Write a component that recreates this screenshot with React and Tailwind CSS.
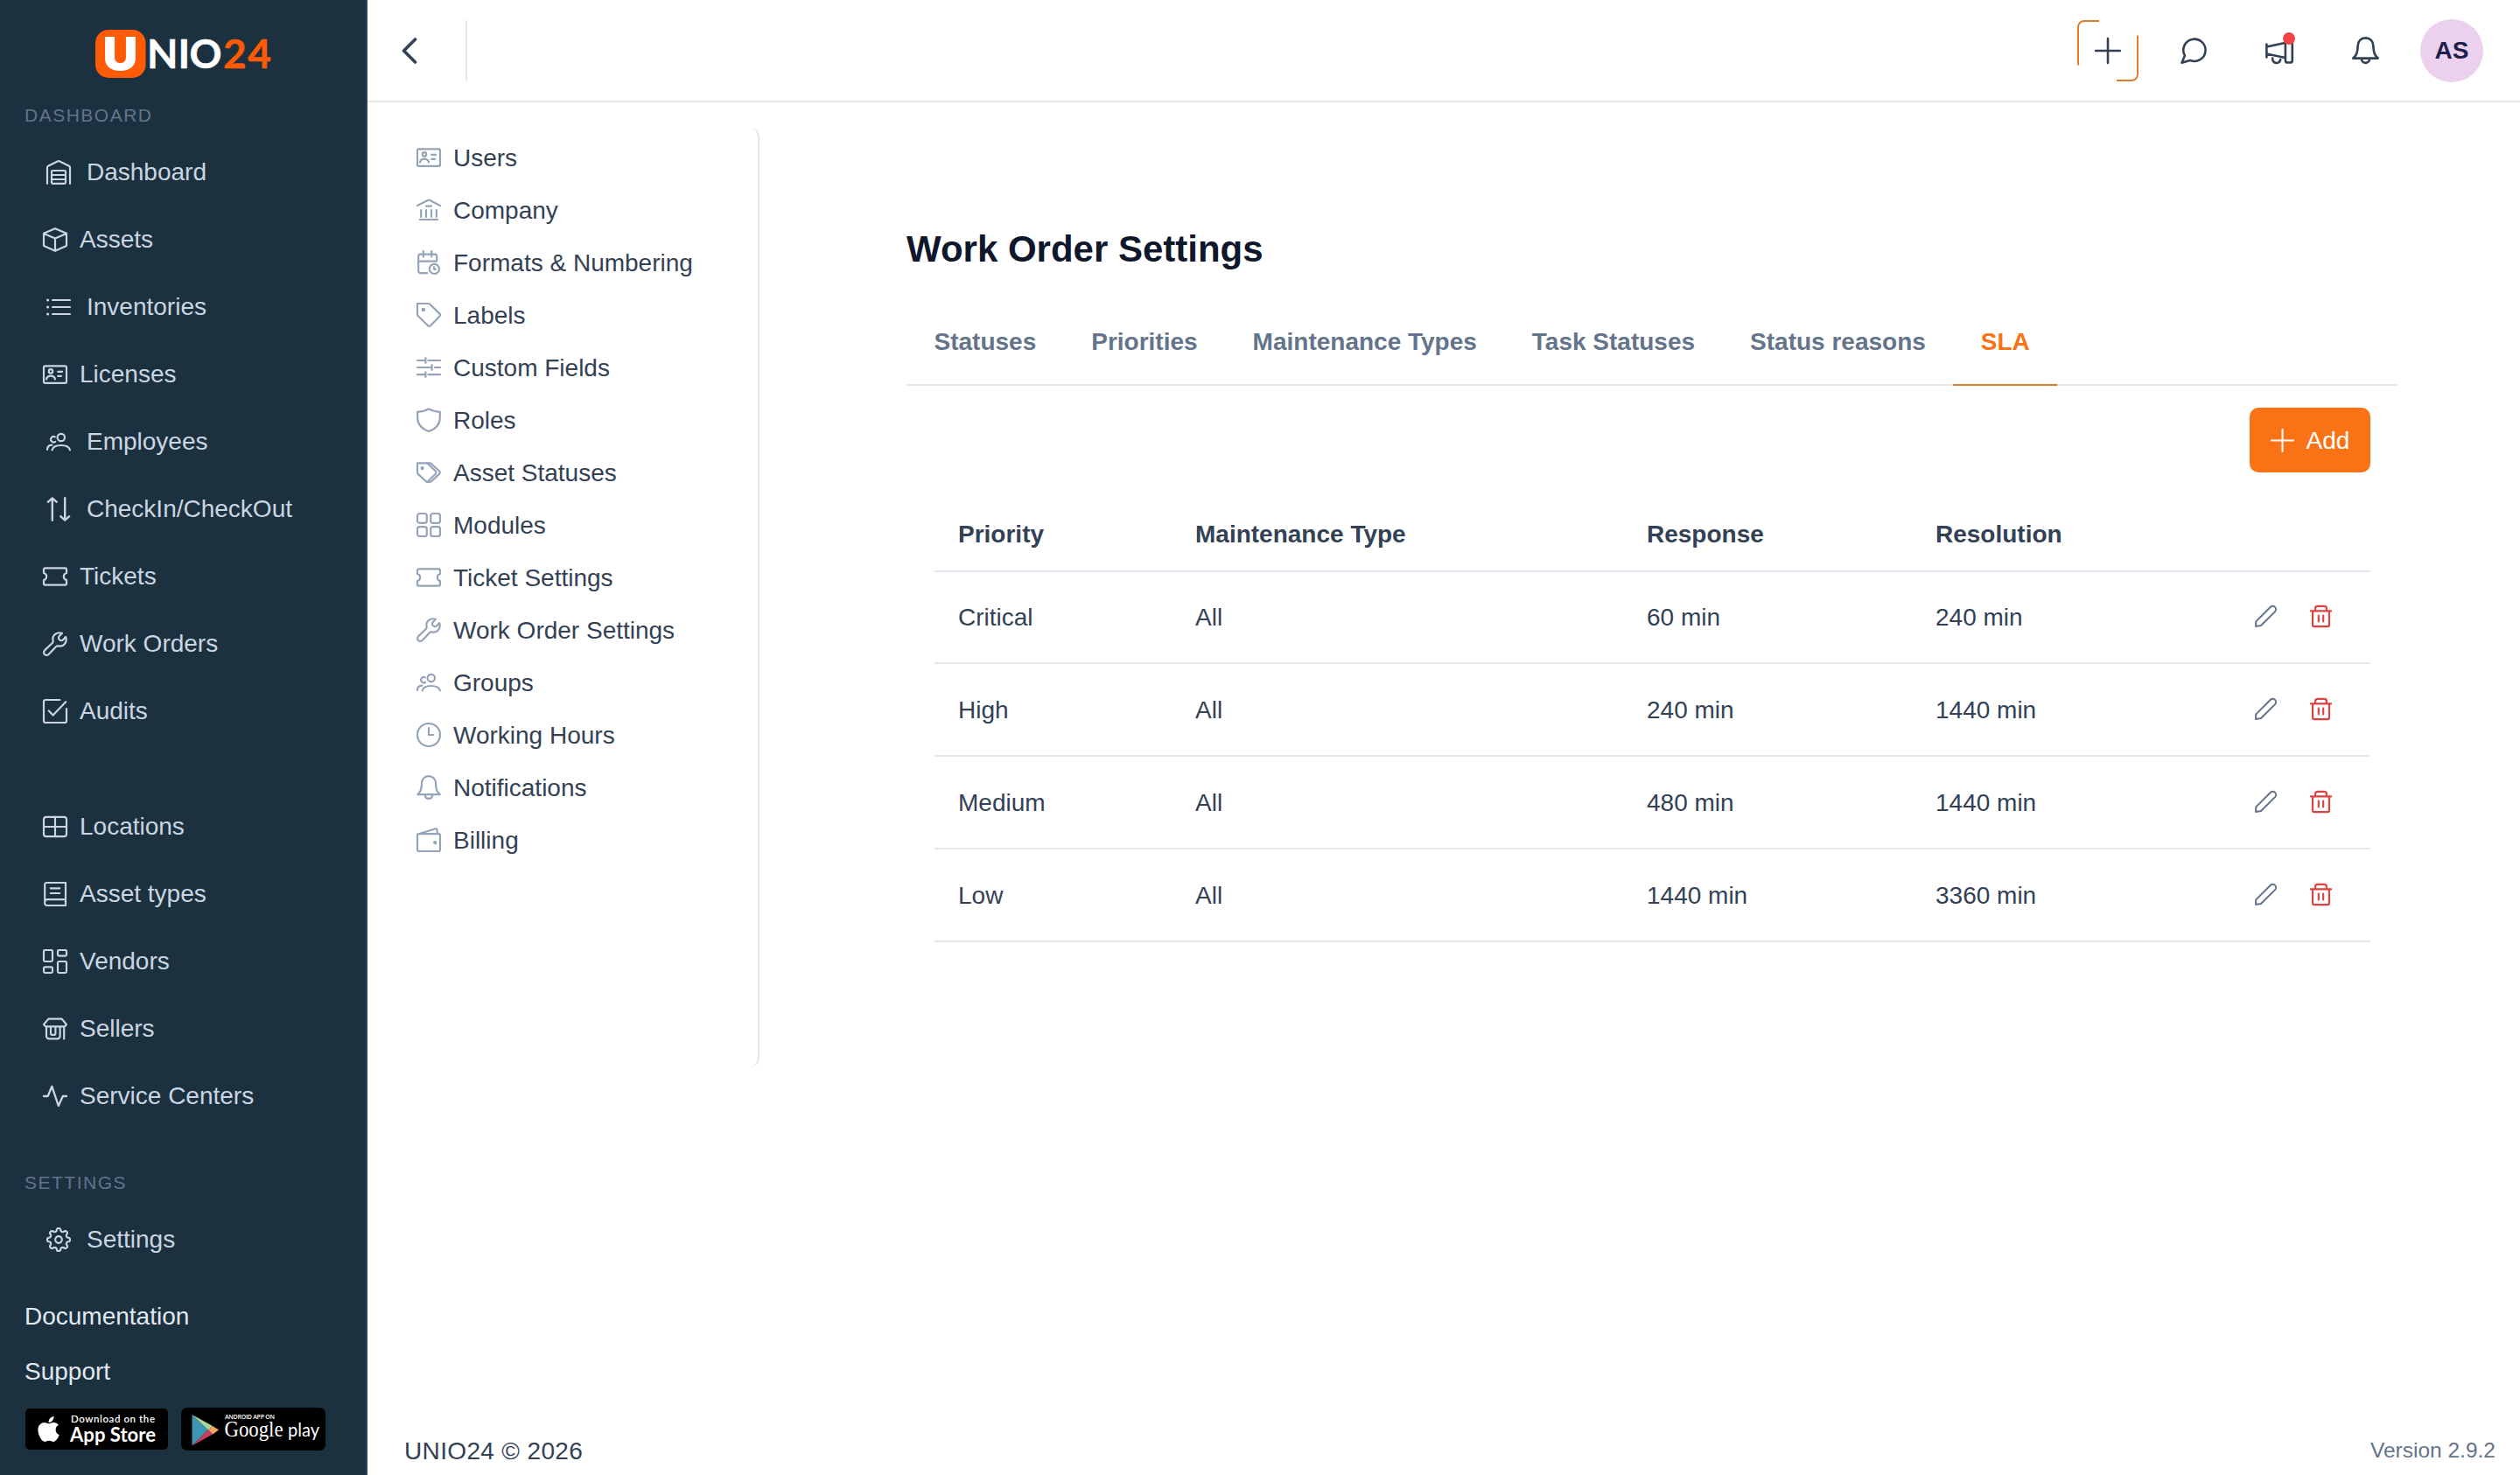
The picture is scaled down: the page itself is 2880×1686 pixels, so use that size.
import React from 'react';
import { FaApple } from 'react-icons/fa';

const gearPath = () => {
    const points = [];
    for (let i = 0; i < 160; i++) {
        const a = (i / 160) * Math.PI * 2;
        const r = 5.7 + 0.82 * Math.tanh(2 * Math.cos(a * 8));
        points.push(`${(7 + r * Math.sin(a)).toFixed(2)} ${(7 - r * Math.cos(a)).toFixed(2)}`);
    }
    return `M${points.join('L')}Z`;
};

// All glyphs are drawn on a 14x14 grid
const icons = {
    warehouse: (
        <>
            <path d="M.5 13.5V4.1a.8.8 0 0 1 .5-.7L6.6.6a1 1 0 0 1 .8 0L13 3.4a.8.8 0 0 1 .5.7v9.4" />
            <rect x="3" y="6" width="8" height="7.4" rx=".6" />
            <path d="M3 8.5h8M3 11h8" />
        </>
    ),
    box: <path d="M7 .6 13.5 3.4v7.1L7 13.4.5 10.5V3.4L7 .6ZM.5 3.5 7 6.3l6.5-2.8M7 6.3v7" />,
    list: (
        <>
            <path d="M3.5 3h10M3.5 7h10M3.5 11h10" />
            <path strokeWidth="1.6" d="M.8 3h.01M.8 7h.01M.8 11h.01" />
        </>
    ),
    idCard: (
        <>
            <rect x=".5" y="2.2" width="13" height="9.7" rx=".8" />
            <circle cx="4.5" cy="5.2" r="1.1" />
            <path d="M2 9.7c.3-1.3 1.3-1.9 2.5-1.9s2.200.6 2.500 1.900M8.600 5.400h2.500M8.600 7.900h1.900" />
        </>
    ),
    people: (
        <>
            <circle cx="8.400" cy="4.500" r="2.100" />
            <path d="M3.300 11.700C3.800 9.700 5.900 9 8.400 9s4.500.7 5.100 2.700M4.900 4.200a1.600 1.600 0 1 0 .2 2.700M.5 11.500C.5 9.900 1.500 8.900 3.200 8.800" />
        </>
    ),
    arrows: (
        <path strokeWidth="1.2" d="M3.400 13.400V.8M.9 2.900 3.400.7l2.500 2.200M10.600.6v12.600M8.100 11.100l2.500 2.200 2.500-2.200" />
    ),
    ticket: (
        <path d="M.5 5V3a.8.8 0 0 1 .8-.8h11.400a.8.8 0 0 1 .8.8v2a2.050 2.050 0 0 0 0 4v2a.8.8 0 0 1-.8.8H1.300a.8.8 0 0 1-.8-.8V9a2.050 2.050 0 0 0 0-4Z" />
    ),
    wrench: (
        <path d="M11 .9C8.200-.1 5 2 5.800 5.300c.1.5 0 .8-.4 1.200L1 10.700A1.600 1.600 0 0 0 3.300 13l4.300-4.500c.3-.3.7-.4 1.100-.3C12 9 14.100 5.800 13.100 3l-1.500 1.600a1.500 1.500 0 0 1-2.200-2.100L11 .9Z" />
    ),
    audit: (
        <path d="M9.700.5H1.500a1 1 0 0 0-1 1v11a1 1 0 0 0 1 1h11a1 1 0 0 0 1-1V5.600M3.400 6.700l2.400 2.600L13.100 1.600" />
    ),
    grid: (
        <>
            <rect x=".5" y="1.400" width="13" height="11.200" rx="1.500" />
            <path d="M7 1.400v11.200M.5 7h13" />
        </>
    ),
    book: (
        <path d="M13 10.100V.5H2.100a1 1 0 0 0-1 1v10.700a1.300 1.300 0 0 0 1.300 1.300H13M13 10.100v3.400M13 10.100H2.400A1.300 1.300 0 0 0 1.100 11.400M4.400 3.700H9.600M4.400 6.500H9.600" />
    ),
    blocks: (
        <>
            <rect x=".5" y=".5" width="5" height="6.500" rx=".7" />
            <rect x="8.500" y=".5" width="5" height="3.300" rx=".7" />
            <rect x=".5" y="10.200" width="5" height="3.300" rx=".7" />
            <rect x="8.500" y="7" width="5" height="6.500" rx=".7" />
        </>
    ),
    store: (
        <path d="M3.200 1.300h7.600l2.700 3.200-1 1.200h-11l-1-1.200 2.700-3.200ZM2 5.700v5.400a1.600 1.600 0 0 0 1.600 1.600h4.600a1.600 1.600 0 0 0 1.600-1.600V5.700M4.500 5.700v4.200c0 .3.2.5.5.5h1.700c.3 0 .5-.2.500-.5V5.700M12.100 5.700v7" />
    ),
    pulse: <path strokeWidth="1.150" d="M.5 7h2.300l2.400-5.600L8.900 12.500 11.400 7h2.100" />,
    gear: (
        <>
            <path d={gearPath()} />
            <circle cx="7" cy="7" r="1.900" />
        </>
    ),
    bank: (
        <path d="M.5 4.500 6.600 1.400a1 1 0 0 1 .8 0l6.100 3.100M5.500 4.800h3M2.600 7v4M5.500 7v4M8.500 7v4M11.400 7v4M1.900 12.500h10.200" />
    ),
    calendar: (
        <>
            <path d="M6.100 13.100H2.300A1.200 1.200 0 0 1 1.100 11.900V3.500a1.200 1.200 0 0 1 1.200-1.200h8.100a1.200 1.200 0 0 1 1.200 1.200v2.800H1.100M3.900.6v3.100M8.600.6v3.100" />
            <circle cx="10.200" cy="10.700" r="2.800" />
            <path d="M10 9.600v1.300h.9" />
        </>
    ),
    tag: (
        <>
            <path d="M.5.5h6.300c.3 0 .5.1.7.3l5.700 5.500a1 1 0 0 1 0 1.400L8 13.100a1 1 0 0 1-1.400 0L.8 7.500A1 1 0 0 1 .5 6.800V.5Z" />
            <circle cx="3.900" cy="4" r=".6" fill="currentColor" />
        </>
    ),
    sliders: (
        <path d="M.5 3h4.600M6.700 3h6.800M5.200 1.600v2.800M.5 7h8M10.500 7h3M8.800 5.600v2.800M.5 11.100h4.600M6.700 11.100h6.800M5.200 9.700v2.800" />
    ),
    shield: (
        <path d="M7 .7C5.100 1.800 3 2.300.6 2.400v3.300c0 4 2.600 6.400 6.400 7.800 3.800-1.400 6.400-3.800 6.400-7.800V2.400C11 2.300 8.900 1.800 7 .7Z" />
    ),
    tags: (
        <>
            <path d="M.5 1.700h5.300c.3 0 .5.1.7.3l4.500 4.400a1 1 0 0 1 0 1.300l-4.300 4.300a1 1 0 0 1-1.400 0L.8 7.800a1 1 0 0 1-.3-.7V1.700Z" />
            <path d="M5.800 1.700h1.900c.3 0 .5.1.7.3l4.800 4.400a1 1 0 0 1 0 1.300l-4.500 4.300c-.3.300-.6.400-1 .4H6" />
            <circle cx="3.300" cy="4.600" r=".5" fill="currentColor" />
        </>
    ),
    modules: (
        <>
            <rect x=".5" y=".5" width="5.400" height="5.400" rx="1.300" />
            <rect x="8.100" y=".5" width="5.400" height="5.400" rx="1.300" />
            <rect x=".5" y="8.100" width="5.400" height="5.400" rx="1.300" />
            <rect x="8.100" y="8.100" width="5.400" height="5.400" rx="1.300" />
        </>
    ),
    clock: (
        <>
            <circle cx="7" cy="7" r="6.500" />
            <path d="M7 3.100V7h2.500" />
        </>
    ),
    bell: (
        <path d="M7 .6C4.700.6 3 2.300 3 4.700c0 3.200-.6 5-2.400 6.400h12.800C11.600 9.700 11 7.900 11 4.700 11 2.300 9.300.6 7 .6ZM4.900 11.300c.1 2.900 4.100 2.900 4.200 0" />
    ),
    wallet: (
        <>
            <rect x=".5" y="3.600" width="13" height="9.900" rx=".9" />
            <path d="M2 3.400 10.900.6a.6.6 0 0 1 .8.5l.3 2.400" />
            <circle cx="10.600" cy="8.600" r=".5" fill="currentColor" />
        </>
    ),
    plus: <path d="M7 .5v13M.5 7h13" />,
    chat: <path d="M.7 13.400 2.300 9.600A5.900 5.900 0 1 1 5.100 12.100L.7 13.400Z" />,
    pencil: <path d="M.6 13.400.7 10.300 9.900 1.100A1.950 1.950 0 0 1 12.900 4L3.900 12.900.6 13.400Z" />,
    trash: (
        <path d="M.5 3.600h13M1.700 3.600v8.900a1 1 0 0 0 1 1h8.600a1 1 0 0 0 1-1V3.600M3.400 3.600V2A1.500 1.500 0 0 1 4.900.5h4.200A1.500 1.500 0 0 1 10.600 2v1.600M5.500 6.500v3.800M8.500 6.500v3.800" />
    ),
};

const Icon = ({ name, className = 'w-7 h-7', strokeWidth = 1.08 }) => (
    <svg
        viewBox="0 0 14 14"
        className={`shrink-0 overflow-visible ${className}`}
        fill="none"
        stroke="currentColor"
        strokeWidth={strokeWidth}
        strokeLinecap="round"
        strokeLinejoin="round"
    >
        {icons[name]}
    </svg>
);

const mainLinks = [
    { label: 'Dashboard', icon: 'warehouse', wide: true },
    { label: 'Assets', icon: 'box' },
    { label: 'Inventories', icon: 'list', wide: true },
    { label: 'Licenses', icon: 'idCard' },
    { label: 'Employees', icon: 'people', wide: true },
    { label: 'CheckIn/CheckOut', icon: 'arrows', wide: true },
    { label: 'Tickets', icon: 'ticket' },
    { label: 'Work Orders', icon: 'wrench' },
    { label: 'Audits', icon: 'audit' },
];

const catalogLinks = [
    { label: 'Locations', icon: 'grid' },
    { label: 'Asset types', icon: 'book' },
    { label: 'Vendors', icon: 'blocks' },
    { label: 'Sellers', icon: 'store' },
    { label: 'Service Centers', icon: 'pulse' },
];

const settingsMenu = [
    { label: 'Users', icon: 'idCard' },
    { label: 'Company', icon: 'bank' },
    { label: 'Formats & Numbering', icon: 'calendar' },
    { label: 'Labels', icon: 'tag' },
    { label: 'Custom Fields', icon: 'sliders' },
    { label: 'Roles', icon: 'shield' },
    { label: 'Asset Statuses', icon: 'tags' },
    { label: 'Modules', icon: 'modules' },
    { label: 'Ticket Settings', icon: 'ticket' },
    { label: 'Work Order Settings', icon: 'wrench' },
    { label: 'Groups', icon: 'people' },
    { label: 'Working Hours', icon: 'clock' },
    { label: 'Notifications', icon: 'bell' },
    { label: 'Billing', icon: 'wallet' },
];

const tabs = ['Statuses', 'Priorities', 'Maintenance Types', 'Task Statuses', 'Status reasons', 'SLA'];

const rows = [
    { priority: 'Critical', type: 'All', response: '60 min', resolution: '240 min' },
    { priority: 'High', type: 'All', response: '240 min', resolution: '1440 min' },
    { priority: 'Medium', type: 'All', response: '480 min', resolution: '1440 min' },
    { priority: 'Low', type: 'All', response: '1440 min', resolution: '3360 min' },
];

const SideLink = ({ label, icon, wide }) => (
    <a href="#" className={`flex h-[77px] items-center ${wide ? 'gap-[18px] pl-[53px]' : 'gap-[14px] pl-[49px]'}`}>
        <Icon name={icon} />
        <span>{label}</span>
    </a>
);

const Logo = () => (
    <div className="ml-[109px] flex h-[57px] items-start">
        <svg viewBox="0 0 202 70" className="h-[70px] w-[202px] shrink-0 overflow-visible">
            <rect y="1" width="57.500" height="55" rx="15" fill="#ff5a05" />
            <text x="8.500" y="46.500" textLength="40" lengthAdjust="spacingAndGlyphs" fontFamily="Inter, sans-serif" fontWeight="900" fontSize="52" fill="#fff">U</text>
            <g fontFamily="Lato, sans-serif" fontWeight="700" fontSize="46" fill="#fff" stroke="#fff" strokeWidth=".5">
                <text x="59" y="45">N</text>
                <text x="94.500" y="45">I</text>
                <text x="107.500" y="45" textLength="37" lengthAdjust="spacingAndGlyphs">O</text>
                <text x="146" y="45" fill="#ff5a05" stroke="#ff5a05" textLength="55">24</text>
            </g>
        </svg>
    </div>
);

const AppStoreBadge = () => (
    <a href="#" className="flex h-[47px] w-[163px] items-center rounded-[5px] bg-black pl-[12px] text-white">
        <FaApple className="h-[33px] w-[29px]" />
        <svg viewBox="0 0 100 47" className="ml-[10px] h-[47px] w-[100px] overflow-visible" fill="#fff">
            <text x="1" y="16" fontFamily="Lato, sans-serif" fontWeight="600" fontSize="11.500" textLength="96">Download on the</text>
            <text x="0" y="37.500" fontFamily="Lato, sans-serif" fontWeight="700" fontSize="22.500" textLength="98" lengthAdjust="spacingAndGlyphs">App Store</text>
        </svg>
    </a>
);

const GooglePlayBadge = () => (
    <a href="#" className="flex h-[49px] w-[165px] rounded-[7px] bg-black">
        <svg viewBox="0 0 165 49" className="h-[49px] w-[165px] overflow-visible">
            <path d="M12.500 8v35.500L31 25.500Z" fill="#3f96b4" />
            <path d="M12.500 8 36 21l-5 4.500Z" fill="#a9d79b" />
            <path d="M36 21l7 4.500-7 5-5-5Z" fill="#f9a267" />
            <path d="M12.500 43.500 36 30.500l-5-5Z" fill="#c8405c" />
            <g fill="#fff">
                <text x="50" y="13" fontFamily="'Open Sans', sans-serif" fontWeight="600" fontSize="7" textLength="57">ANDROID APP ON</text>
                <text x="49.500" y="33" fontFamily="'Liberation Serif', serif" fontSize="25" textLength="67" lengthAdjust="spacingAndGlyphs">Google</text>
                <text x="122" y="33" fontFamily="Lato, sans-serif" fontSize="22" textLength="36" lengthAdjust="spacingAndGlyphs">play</text>
            </g>
        </svg>
    </a>
);

const Sidebar = () => (
    <aside className="flex w-[420px] shrink-0 flex-col border-r-2 border-[#2a4158] bg-[#1b313f] pt-[33px] text-[28px] text-[#cbd5e1]">
        <Logo />
        <div className="mt-4 flex h-[52px] items-center pb-[2px] pl-7 text-[21px] tracking-[1.500px] text-[#64748b]">DASHBOARD</div>
        <nav>{mainLinks.map((link) => <SideLink key={link.label} {...link} />)}</nav>
        <nav className="mt-[55px]">{catalogLinks.map((link) => <SideLink key={link.label} {...link} />)}</nav>
        <div className="mt-[35px] flex h-[52px] items-center pb-[2px] pl-7 text-[21px] tracking-[1.500px] text-[#64748b]">SETTINGS</div>
        <SideLink label="Settings" icon="gear" wide />
        <div className="mt-[18px] flex flex-col pl-7 text-[#e2e8f0]">
            <a href="#" className="flex h-[63px] items-center">Documentation</a>
            <a href="#" className="flex h-[63px] items-center">Support</a>
        </div>
        <div className="mt-[10px] flex items-center gap-[15px] pl-[29px]">
            <AppStoreBadge />
            <GooglePlayBadge />
        </div>
    </aside>
);

const Header = () => (
    <header className="flex h-[117px] shrink-0 items-center justify-between border-b-2 border-[#e5e7eb] pl-[39px] pr-[42px] text-[#334155]">
        <div className="flex items-center">
            <svg viewBox="0 0 18 32" className="h-8 w-[18px]" fill="none" stroke="currentColor" strokeWidth="3.600" strokeLinecap="round" strokeLinejoin="round">
                <path d="M15.500 3 2.500 16l13 13" />
            </svg>
            <div className="ml-[55px] h-[70px] w-[2px] bg-[#e5e7eb]"></div>
        </div>
        <div className="flex items-center gap-7">
            <button className="relative flex h-[70px] w-[70px] items-center justify-center">
                <svg viewBox="0 0 70 70" className="absolute inset-0 h-[70px] w-[70px]" fill="none" stroke="#e27c2c" strokeWidth="2">
                    <path d="M1 51.500V8a7 7 0 0 1 7-7h17M69 17.500V62a7 7 0 0 1-7 7H45" />
                </svg>
                <Icon name="plus" className="h-[30px] w-[30px]" strokeWidth={1.2} />
            </button>
            <button className="flex h-[70px] w-[70px] items-center justify-center">
                <Icon name="chat" className="h-[30px] w-[30px]" strokeWidth={1.2} />
            </button>
            <button className="relative flex h-[70px] w-[70px] items-center justify-center">
                <svg viewBox="0 0 32 30" className="h-[30px] w-8 overflow-visible" fill="none" stroke="currentColor" strokeWidth="2.600" strokeLinecap="round" strokeLinejoin="round">
                    <path d="M1.400 7.500v15M1.400 10.500 22.600 6M1.400 18.500 22.600 23M8.200 23.500c-.6 6.500 8.200 7.500 9 1.500" />
                    <rect x="22.900" y="2.500" width="7.900" height="26" rx="2.600" />
                </svg>
                <span className="absolute right-[17px] top-[14px] h-[14px] w-[14px] rounded-full bg-[#ef4444]"></span>
            </button>
            <button className="flex h-[70px] w-[70px] items-center justify-center">
                <Icon name="bell" className="h-[31px] w-[31px]" strokeWidth={1.2} />
            </button>
            <div className="flex h-[72px] w-[72px] items-center justify-center rounded-full bg-[#ebd1ee] text-[28px] font-bold text-[#1b214c]">
                AS
            </div>
        </div>
    </header>
);

const SlaTable = () => (
    <div className="mr-[31px] ml-8 mt-7 text-[#334155]">
        <div className="grid h-[86px] grid-cols-[270px_516px_330px_1fr] items-center border-b-2 border-[#e2e8f0] pt-[2px] font-bold">
            <div className="pl-[27px]">Priority</div>
            <div className="pl-7">Maintenance Type</div>
            <div className="pl-7">Response</div>
            <div className="pl-7">Resolution</div>
        </div>
        {rows.map((row) => (
            <div key={row.priority} className="grid h-[106px] grid-cols-[270px_516px_330px_1fr_auto] items-center border-b-2 border-[#e5e7eb] nth-2:h-[105px]">
                <div className="pl-[27px] pt-px">{row.priority}</div>
                <div className="pl-7 pt-px">{row.type}</div>
                <div className="pl-7 pt-px">{row.response}</div>
                <div className="pl-7 pt-px">{row.resolution}</div>
                <div className="flex gap-[38px] pr-[44px] pb-[2px]">
                    <Icon name="pencil" className="h-[25px] w-[25px] text-[#64748b]" strokeWidth={1.15} />
                    <Icon name="trash" className="h-[25px] w-[25px] text-[#df4040]" strokeWidth={1.2} />
                </div>
            </div>
        ))}
    </div>
);

const App = () => {
    const activeTab = 'SLA';

    return (
        <div className="flex h-[1686px] w-[2880px] overflow-hidden bg-white font-['Liberation_Sans',Arial,sans-serif] text-[28px] leading-none">
            <Sidebar />
            <div className="flex flex-1 flex-col">
                <Header />
                <div className="flex flex-1">
                    <nav className="mt-7 ml-7 h-[1075px] w-[420px] shrink-0 rounded-r-[12px] border-r-2 border-[#e2e4e8] pt-[5px] text-[#334155]">
                        {settingsMenu.map((item) => (
                            <a key={item.label} href="#" className="flex h-[60px] items-center gap-[14px] pl-7">
                                <Icon name={item.icon} className="h-7 w-7 text-[#94a3b8]" />
                                <span className="pt-[2px]">{item.label}</span>
                            </a>
                        ))}
                    </nav>
                    <main className="ml-[168px] w-[1704px] pt-[140px]">
                        <h1 className="flex h-14 items-center text-[42px] font-bold text-[#0f172a]">Work Order Settings</h1>
                        <div className="mt-7 flex h-[100px] border-b-2 border-[#e5e7eb] font-bold text-[#64748b]">
                            {tabs.map((tab) => (
                                <button
                                    key={tab}
                                    className={`-mb-[2px] flex items-center border-b-2 px-[31.5px] pt-[2px] ${tab === activeTab ? 'border-[#e27c2c] text-[#f97316]' : 'border-transparent'}`}
                                >
                                    {tab}
                                </button>
                            ))}
                        </div>
                        <div className="mt-[25px] flex justify-end pr-[31px]">
                            <button className="flex h-[74px] w-[138px] items-center justify-center gap-[14px] rounded-[10px] bg-[#f97316] text-white">
                                <Icon name="plus" className="h-[27px] w-[27px]" />
                                <span className="pt-px">Add</span>
                            </button>
                        </div>
                        <SlaTable />
                    </main>
                </div>
                <footer className="flex h-14 shrink-0 items-center justify-between pt-px pl-[42px] pr-7 text-[#334155]">
                    <span className="tracking-[0.350px]">UNIO24 © 2026</span>
                    <span className="text-[24.5px] text-[#64748b]">Version 2.9.2</span>
                </footer>
            </div>
        </div>
    );
};

export default App;
